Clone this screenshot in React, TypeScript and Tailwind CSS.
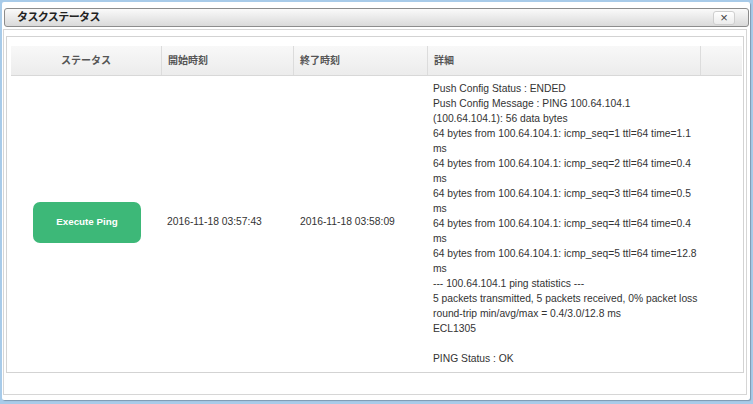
import React from 'react';

const DETAIL_LINES = [
  'Push Config Status : ENDED',
  'Push Config Message : PING 100.64.104.1',
  '(100.64.104.1): 56 data bytes',
  '64 bytes from 100.64.104.1: icmp_seq=1 ttl=64 time=1.1',
  'ms',
  '64 bytes from 100.64.104.1: icmp_seq=2 ttl=64 time=0.4',
  'ms',
  '64 bytes from 100.64.104.1: icmp_seq=3 ttl=64 time=0.5',
  'ms',
  '64 bytes from 100.64.104.1: icmp_seq=4 ttl=64 time=0.4',
  'ms',
  '64 bytes from 100.64.104.1: icmp_seq=5 ttl=64 time=12.8',
  'ms',
  '--- 100.64.104.1 ping statistics ---',
  '5 packets transmitted, 5 packets received, 0% packet loss',
  'round-trip min/avg/max = 0.4/3.0/12.8 ms',
  'ECL1305',
  '',
  'PING Status : OK',
];

const FONT = "font-['Liberation_Sans','Noto_Sans_CJK_JP',sans-serif]";

export default function App() {
  return (
    <div className={`w-[753px] h-[404px] bg-[#a8cbe9] pl-[2px] pt-[2px] pr-[3px] pb-[4px] ${FONT}`}>
      <div className="h-full bg-white rounded-[2px] pt-[6px] flex flex-col shadow-[1px_1px_1px_rgba(0,0,0,0.25)]">
        {/* title bar */}
        <div className="ml-[2px] mr-[1px] h-[19px] flex items-center justify-between border border-[#8c8c8c] rounded-[3px] bg-gradient-to-b from-[#fafafa] to-[#dadada] pl-[12px] pr-[13px]">
          <span className="text-[11px] font-bold text-[#222] tracking-[-0.6px] leading-none">タスクステータス</span>
          <button
            type="button"
            className="w-[22px] h-[14px] flex items-center justify-center border border-[#cfcfcf] rounded-[3px] bg-gradient-to-b from-white to-[#ececec] text-[#444] text-[13px] leading-none"
          >
            ×
          </button>
        </div>

        {/* content box */}
        <div className="mt-[2px] ml-[1px] mr-[3px] h-[366px] border border-[#d6d6d6] pt-[6px] pl-[2px] pr-[2px]">
          <div className="h-[337px] border border-[#d3d3d3] pl-[4px] pr-[1px] pt-[9px]">
            {/* header */}
            <div className="grid grid-cols-[150px_132px_134px_273px_1fr] h-[30px] bg-gradient-to-b from-[#f8f8f8] to-[#ececec] border-b border-[#d8d8d8] text-[10px] font-bold text-[#555]">
              <div className="flex items-center justify-center">ステータス</div>
              <div className="flex items-center pl-[6px] border-l border-[#dcdcdc]">開始時刻</div>
              <div className="flex items-center pl-[6px] border-l border-[#dcdcdc]">終了時刻</div>
              <div className="flex items-center pl-[6px] border-l border-[#dcdcdc]">詳細</div>
              <div className="border-l border-[#dcdcdc]" />
            </div>

            {/* row */}
            <div className="grid grid-cols-[150px_132px_134px_273px_1fr] text-[10.3px] text-[#333]">
              <div className="flex items-center pl-[22px]">
                <button
                  type="button"
                  className="w-[108px] h-[41px] rounded-[7px] bg-[#3db878] text-white text-[9.8px] font-bold"
                >
                  Execute Ping
                </button>
              </div>
              <div className="flex items-center pl-[6px]">2016-11-18 03:57:43</div>
              <div className="flex items-center pl-[7px]">2016-11-18 03:58:09</div>
              <div className="pl-[6px] pt-[5px] pb-[2px] leading-[15px] whitespace-nowrap">
                {DETAIL_LINES.map((line, i) => (
                  <div key={i} className="h-[15px]">
                    {line}
                  </div>
                ))}
              </div>
              <div />
            </div>
          </div>
        </div>
      </div>
    </div>
  );
}
